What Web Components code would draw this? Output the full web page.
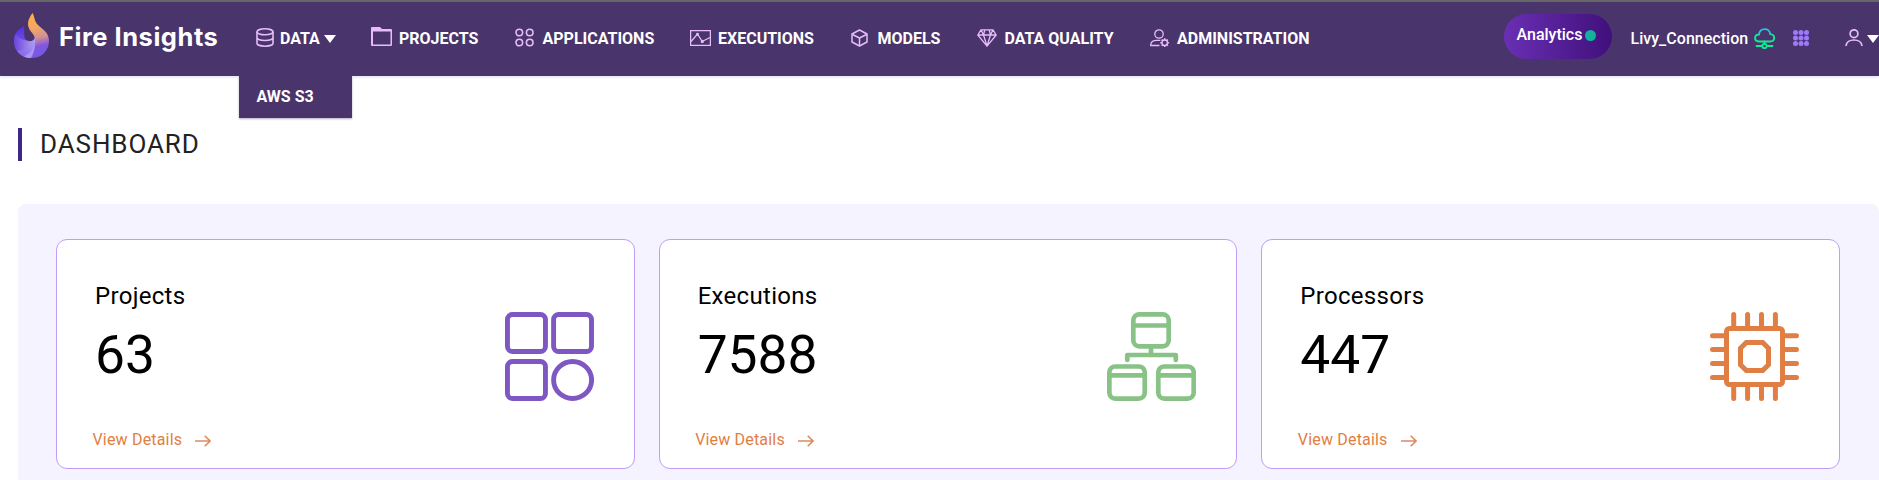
<!DOCTYPE html>
<html lang="en"><head><meta charset="utf-8"><title>Fire Insights</title>
<style>html,body{margin:0;height:100%;overflow:hidden;background:#fff;font-family:Roboto,"Liberation Sans",sans-serif}</style></head><body>
<fire-app></fire-app>
<script>
const define=(name,html,setup)=>customElements.define(name,class extends HTMLElement{
  connectedCallback(){
    if(this.shadowRoot)return;
    const t=document.createElement('template');t.innerHTML=html;
    this.attachShadow({mode:'open'}).append(t.content.cloneNode(true));
    if(setup)setup(this,this.shadowRoot);
  }});
const S='fill="none" stroke="#e6bdf6" ';
const icons={
 data:`<svg width="18" height="19" viewBox="0 0 18 19" ${S} stroke-width="1.600"><ellipse cx="9" cy="3.800" rx="8" ry="3"/><path d="M1 3.800v11.400c0 1.700 3.600 3 8 3s8-1.300 8-3V3.800M1 9.500c0 1.700 3.600 3 8 3s8-1.300 8-3"/></svg>`,
 projects:`<svg width="21" height="19" viewBox="0 0 21 19"><path fill="#e6bdf6" fill-rule="evenodd" d="M0 1Q0 0 1 0H9L11 2H20Q21 2 21 3V18Q21 19 20 19H1Q0 19 0 18ZM2 4.500V17.500H19.500V4.500Z"/></svg>`,
 applications:`<svg width="19" height="19" viewBox="0 0 19 19" ${S} stroke-width="1.600"><circle cx="4.300" cy="4.500" r="3.300"/><circle cx="14.700" cy="4.500" r="3.300"/><circle cx="4.300" cy="14.500" r="3.300"/><circle cx="14.700" cy="14.500" r="3.300"/></svg>`,
 executions:`<svg width="21" height="16" viewBox="0 0 21 16" ${S} stroke-width="1.300"><path d="M.6.6h19.800v14.800H.6z"/><path d="M1 11.500 7.500 4l4.700 7.500L20 7.500"/><circle cx="7.500" cy="4.200" r=".8"/><circle cx="12.300" cy="11.500" r="1"/></svg>`,
 models:`<svg width="17" height="18" viewBox="0 0 17 18" ${S} stroke-width="1.500" stroke-linejoin="round"><path d="m8.500 1 7.500 4v8l-7.500 4L1 13V5z"/><path d="m1.500 5.500 7 3.500 7-3.500M8.500 9v8"/></svg>`,
 quality:`<svg width="20" height="18" viewBox="0 0 20 18" ${S} stroke-width="1.300" stroke-linejoin="round"><path d="M4 .8h12l3.200 5.200L10 17.200.8 6zM.8 6h18.400M4 .8 6.500 6 10 17 13.500 6 16 .8M6.500 6 7.800.8M13.500 6 12.200.8"/></svg>`,
 admin:`<svg width="20" height="19" viewBox="0 0 20 19" ${S} stroke-width="1.300"><circle cx="9" cy="5" r="4.200"/><path d="M9.500 16.500H.7v-.7c.2-3.200 3-4.400 6-4.400h3.600"/><circle cx="14.700" cy="13.700" r="2.700"/><path stroke-width="1.600" d="M14.700 11V9.300M14.700 16.400v1.700M12 13.700h-1.700M17.400 13.700h1.700M12.800 11.800l-1.200-1.200M16.600 15.600l1.200 1.200M16.600 11.800l1.200-1.200M12.800 15.600l-1.200 1.200"/></svg>`};
const big={
 projects:`<svg width="89" height="89" viewBox="0 0 89 89" fill="none" stroke="#7f57c2" stroke-width="4.900"><rect x="2.450" y="2.450" width="38" height="37" rx="5"/><rect x="48.600" y="2.450" width="37.900" height="37" rx="5"/><rect x="2.450" y="49.500" width="38" height="37" rx="5"/><ellipse cx="67.600" cy="68" rx="19" ry="18.500"/></svg>`,
 executions:`<svg width="89" height="89" viewBox="0 0 89 89" fill="none" stroke="#89c286" stroke-width="4.700" stroke-linecap="round"><rect x="26.300" y="2.350" width="35.400" height="32" rx="6"/><path stroke-linecap="butt" d="M26 13.500h36M2 63.300h36M51 63.300h36M44 35v8"/><path stroke-linejoin="round" d="M20.300 48v-5h48.500v5"/><rect x="2.350" y="54.500" width="35.400" height="32.100" rx="6"/><rect x="51.300" y="54.500" width="35.400" height="32.100" rx="6"/></svg>`,
 processors:`<svg width="89" height="89" viewBox="0 0 89 89" fill="none" stroke="#e17e43" stroke-width="5" stroke-linecap="round"><rect x="16.500" y="16.500" width="56" height="56" rx="3"/><path d="M36.300 30.500h16.400l5.800 5.800v16.400l-5.800 5.800H36.300l-5.800-5.800V36.300z"/><path d="M23.700 2.500v13M37.600 2.500v13M51.500 2.500v13M65.400 2.500v13M23.700 73.500v13M37.600 73.500v13M51.500 73.500v13M65.400 73.500v13M2.500 23.700h13M2.500 37.600h13M2.500 51.500h13M2.500 65.400h13M73.500 23.700h13M73.500 37.600h13M73.500 51.500h13M73.500 65.400h13"/></svg>`};

define('brand-logo',`<style>:host{display:flex;align-items:flex-start;padding:11px 0 0 14px;color:#fff}svg{flex:none}span{font:700 25.500px/30px Inter,sans-serif;letter-spacing:.53px;margin:9px 0 0 10px;white-space:nowrap}</style>
<svg width="35" height="45" viewBox="0 0 35 45"><defs>
<linearGradient id="f" x1="0" y1="0" x2=".1" y2="1"><stop offset="0" stop-color="#ffb13f"/><stop offset=".35" stop-color="#f3a765"/><stop offset=".58" stop-color="#d39391"/><stop offset=".78" stop-color="#8256de"/><stop offset="1" stop-color="#7759e6"/></linearGradient>
<linearGradient id="a" x1="0" y1="0" x2="0" y2="1"><stop offset="0" stop-color="#4b27df"/><stop offset="1" stop-color="#8d75ee"/></linearGradient>
<linearGradient id="b" x1="0" y1="0" x2="1" y2="0"><stop offset="0" stop-color="#6b43df"/><stop offset="1" stop-color="#bdb0f5"/></linearGradient>
<linearGradient id="g" x1="0" y1="1" x2="1" y2="0"><stop offset="0" stop-color="#7a58e4"/><stop offset="1" stop-color="#b5a7f6"/></linearGradient>
<clipPath id="k"><path d="M10 13C4 16 0 21 0 28c0 10 8 17 17 17 5-5 6-13 4.500-21-1.500 4-5 5-8.500 3.500C8.500 25 11 19 10 13z"/></clipPath></defs>
<g clip-path="url(#k)"><path fill="url(#a)" d="M0 10h24v35H0z"/><path fill="url(#b)" d="M0 19c3 5 7 8 13 8.500L24 23v22H0z"/><path fill="url(#g)" d="M0 38c8 0 16-2 19-10l5-3v20H0z"/><path fill="#a895f5" d="M5 45c8-2 15-7 16-17l3-3v20z"/></g>
<path fill="url(#f)" d="M18.500 0C15 5 13 9 14.500 14c1.500 5 5.500 6 6.500 12 1 7-1 14-4 19 10 .5 18-7 18-17 0-9-7-12-11-16s-3-8-5.500-12z"/></svg><span>Fire Insights</span>`);

define('nav-item',`<style>:host{display:flex;align-items:flex-start;padding-top:var(--top,26px);color:#fff;height:74px;box-sizing:border-box}
.i{display:flex;width:var(--w,28px);flex:none}.t{font:700 16px/20px Roboto,sans-serif;white-space:nowrap;margin-top:calc(27px - var(--top,26px))}</style>
<span class="i"></span><span class="t"><slot></slot></span><slot name="after"></slot>`,(e,r)=>{r.querySelector('.i').innerHTML=icons[e.getAttribute('icon')]});

define('down-caret',`<style>:host{display:block;flex:none;width:0;height:0;border:solid transparent;border-width:8px 6px 0;border-top-color:#fff}</style>`);
define('drop-menu',`<style>:host{position:absolute;left:239px;top:76px;width:113px;height:42px;box-sizing:border-box;padding:11px 17.500px;background:#4a346c;color:#fff;font:700 16px/20px Roboto,sans-serif;box-shadow:0 1px 2px rgba(50,20,80,.35)}</style><slot></slot>`);
define('analytics-pill',`<style>:host{display:flex;box-sizing:border-box;width:108px;height:45px;border-radius:22.500px;margin:12px 18.500px 0 0;padding:11px 0 0 12.500px;background:linear-gradient(90deg,#6a2fb4,#40107b);color:#fff;font:500 16px/20px Roboto,sans-serif}i{width:11px;height:11px;border-radius:50%;background:#12b29c;margin:5px 0 0 3px}</style><slot></slot><i></i>`);

define('user-tools',`<style>:host{display:flex;align-items:flex-start;color:#fff;white-space:nowrap}.l{font:500 16px/20px Roboto,sans-serif;letter-spacing:.03px;margin-top:27px;width:123.500px}svg{flex:none}</style>
<analytics-pill>Analytics</analytics-pill><span class="l">Livy_Connection</span>
<svg style="margin-top:26px" width="21" height="22" viewBox="0 0 21 22" fill="none" stroke-width="1.800" stroke-linecap="round"><defs><linearGradient id="c" x1="0" y1="0" x2="0" y2="1"><stop offset="0" stop-color="#28bfe0"/><stop offset=".7" stop-color="#10ed91"/></linearGradient></defs><path stroke="url(#c)" d="M5 13.500C-.5 13 0 6.800 5 6.500c1-7 10-7 11.300-.4 5.200.6 5.200 7.200-.3 7.400z"/><path stroke="#10ed91" d="M10.500 13.500v2M2.500 18h5M13.500 18h5"/><circle cx="10.500" cy="18" r="2.200" stroke="#10ed91"/></svg>
<svg style="margin:28px 0 0 18px" width="16" height="16" viewBox="0 0 16 16" fill="#9c79ff"><g id="d"><circle cx="2.500" cy="2.500" r="2.500"/><circle cx="8" cy="2.500" r="2.500"/><circle cx="13.500" cy="2.500" r="2.500"/></g><use href="#d" y="5.500"/><use href="#d" y="11"/></svg>
<svg style="margin:27px 4px 0 36px" width="18" height="17" viewBox="0 0 18 17" ${S} stroke-width="1.700"><circle cx="9" cy="4.700" r="3.900"/><path d="M1 17c.5-8 15.500-8 16 0"/></svg><down-caret style="margin-top:33px"></down-caret>`);

define('top-bar',`<style>:host{display:grid;grid-template-columns:256px 115px 144px 175px 161px 126px 173px 354px 375px;height:76px;box-sizing:border-box;border-top:2px solid #666;background:#4a346c;box-shadow:0 1px 3px rgba(100,60,220,.2)}down-caret{margin:7px 0 0 4.500px}</style>
<brand-logo></brand-logo>
<nav-item icon="data" style="--w:24px">DATA<down-caret slot="after"></down-caret></nav-item>
<nav-item icon="projects" style="--top:25px">PROJECTS</nav-item>
<nav-item icon="applications" style="--top:26px;--w:27.500px">APPLICATIONS</nav-item>
<nav-item icon="executions" style="--top:28px">EXECUTIONS</nav-item>
<nav-item icon="models" style="--top:27px;--w:26.500px">MODELS</nav-item>
<nav-item icon="quality" style="--top:27px;--w:27.500px">DATA QUALITY</nav-item>
<nav-item icon="admin" style="--top:27px;--w:27px">ADMINISTRATION</nav-item>
<user-tools></user-tools>`);

define('page-title',`<style>:host{display:block;margin:52px 0 0 18px;border-left:4px solid #3f2787;height:33px;padding-left:18px;font:400 26px/32px Roboto,sans-serif;color:#222;letter-spacing:.9px}</style><slot></slot>`);
define('stat-card',`<style>:host{display:flex;justify-content:space-between;box-sizing:border-box;height:230px;border:1px solid #bf9df8;border-radius:11px;background:#fff;padding:0 40px 0 36px;color:#000}
.n{font-size:24px;line-height:30px;margin:41px 0 0 2px;letter-spacing:.3px}.v{font-size:53.300px;line-height:60px;margin:14px 0 0 2px}.l{display:flex;font-size:16px;line-height:20px;color:#e17e43;margin:45px 0 0 -.5px;letter-spacing:.18px}.l svg{margin:5px 0 0 13px}.g{margin-top:72px}</style>
<div><div class="n"><slot></slot></div><div class="v"></div><div class="l">View Details<svg width="16" height="12" viewBox="0 0 16 12" fill="none" stroke="#db8c60" stroke-width="1.600"><path d="M0 6h15M9.700.8 15 6l-5.300 5.200"/></svg></div></div><div class="g"></div>`,(e,r)=>{r.querySelector('.v').textContent=e.getAttribute('value');r.querySelector('.g').innerHTML=big[e.getAttribute('icon')]});
define('stat-panel',`<style>:host{display:grid;grid-template-columns:repeat(3,1fr);gap:24px;margin:43px 0 0 18px;box-sizing:border-box;height:300px;padding:35px 39px 0 38px;background:#f5f3ff;border-radius:8px}</style><slot></slot>`);
define('fire-app',`<style>:host{display:block;height:480px;overflow:hidden;position:relative}</style><top-bar></top-bar><drop-menu>AWS S3</drop-menu><page-title>DASHBOARD</page-title>
<stat-panel><stat-card icon="projects" value="63">Projects</stat-card><stat-card icon="executions" value="7588">Executions</stat-card><stat-card icon="processors" value="447">Processors</stat-card></stat-panel>`);
</script></body></html>
